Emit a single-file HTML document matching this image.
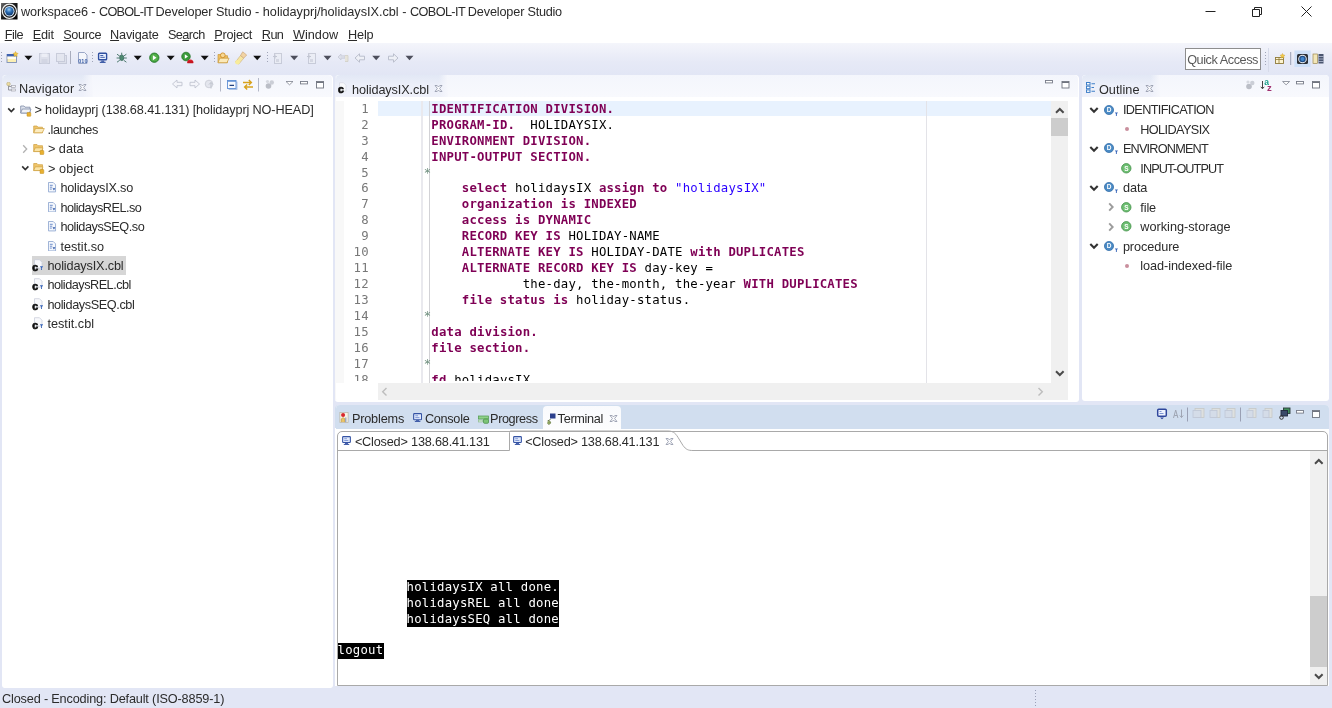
<!DOCTYPE html>
<html lang="en">
<head>
<meta charset="utf-8">
<title>workspace6 - COBOL-IT Developer Studio</title>
<style>
*{box-sizing:border-box;margin:0;padding:0}
html,body{width:1332px;height:708px;overflow:hidden}
body{will-change:transform;position:relative;background:#e2e6f5;font-family:"Liberation Sans",sans-serif;font-size:12.7px;color:#2b2b2b}
.abs{position:absolute}
.t{position:absolute;white-space:pre;line-height:16px;height:16px}
u{text-decoration:underline;text-underline-offset:1px;text-decoration-thickness:1px}
#titlebar{left:0;top:0;width:1332px;height:23px;background:#fff}
#menubar{left:0;top:23px;width:1332px;height:20px;background:#fff}
#toolbar{left:0;top:43px;width:1332px;height:32px;background:linear-gradient(#f4f5fb,#e6e9f6 60%,#e2e6f5)}
.panel{position:absolute;background:#fff;border-radius:4px 4px 3px 3px;overflow:hidden}
.hdr{position:absolute;left:0;top:0;right:0;height:22px;background:#f6f7fc}
.mono{font-family:"DejaVu Sans Mono","Liberation Mono",monospace;font-size:12.3px;letter-spacing:.213px}
.kw{color:#7f0055;font-weight:bold}
.str{color:#2a00ff}
.cm{color:#6f8f7f}
.ln{position:absolute;left:0;width:32.800px;text-align:right;color:#787878;white-space:pre}
.cl{position:absolute;left:42px;white-space:pre;color:#000}
.row{position:absolute;white-space:pre;height:19px;line-height:19px}
</style>
</head>
<body>

<!-- ===== Title bar ===== -->
<div class="abs" id="titlebar">
  <svg class="abs" style="left:1.200px;top:3.300px" width="16.600" height="16.500" viewBox="0 0 17 17">
    <defs><linearGradient id="ig" x1="0" y1="0" x2="1" y2="1"><stop offset="0" stop-color="#6a6a6a"/><stop offset=".45" stop-color="#1c1c1c"/><stop offset="1" stop-color="#000"/></linearGradient>
    <radialGradient id="ib" cx=".45" cy=".3" r=".75"><stop offset="0" stop-color="#9fd0f5"/><stop offset=".45" stop-color="#2d6fb5"/><stop offset="1" stop-color="#0a2f63"/></radialGradient></defs>
    <rect x="0" y="0" width="17" height="17" fill="url(#ig)"/>
    <circle cx="8.600" cy="8.500" r="7.300" fill="none" stroke="#f2f2f2" stroke-width="1.200"/>
    <circle cx="8.600" cy="8.500" r="5.300" fill="#cfe4f6"/>
    <circle cx="8.600" cy="8.500" r="4.300" fill="url(#ib)"/>
  </svg>
  <div class="t" id="title" style="left:20.900px;top:4px"><span style="letter-spacing:-0.068px">workspace6 - </span><span style="letter-spacing:-0.747px">COBOL-IT </span><span style="letter-spacing:-0.096px">Developer </span><span style="letter-spacing:-0.039px">Studio - </span><span style="letter-spacing:-0.010px">holidayprj/holidaysIX.cbl - </span><span style="letter-spacing:-0.591px">COBOL-IT </span><span style="letter-spacing:-0.156px">Developer </span><span style="letter-spacing:-0.314px">Studio</span></div>
  <svg class="abs" style="left:1195px;top:0" width="137" height="23" viewBox="0 0 137 23">
    <path d="M10.5 11.5h10" stroke="#222" stroke-width="1" fill="none"/>
    <path d="M57.5 9.5h7v7h-7zM59.5 9.5v-2h7v7h-2" stroke="#222" stroke-width="1" fill="none"/>
    <path d="M106.5 6.5l10 10M116.5 6.5l-10 10" stroke="#222" stroke-width="1" fill="none"/>
  </svg>
</div>

<!-- ===== Menu bar ===== -->
<div class="abs" id="menubar">
  <div class="t m" style="left:4.7px;top:4px;letter-spacing:-0.505px"><u>F</u>ile</div>
  <div class="t m" style="left:32.7px;top:4px;letter-spacing:-0.193px"><u>E</u>dit</div>
  <div class="t m" style="left:63.2px;top:4px;letter-spacing:-0.349px"><u>S</u>ource</div>
  <div class="t m" style="left:110.1px;top:4px;letter-spacing:-0.199px"><u>N</u>avigate</div>
  <div class="t m" style="left:168.0px;top:4px;letter-spacing:-0.603px">Se<u>a</u>rch</div>
  <div class="t m" style="left:214.2px;top:4px;letter-spacing:-0.215px"><u>P</u>roject</div>
  <div class="t m" style="left:261.8px;top:4px;letter-spacing:-0.599px"><u>R</u>un</div>
  <div class="t m" style="left:292.9px;top:4px;letter-spacing:0.029px"><u>W</u>indow</div>
  <div class="t m" style="left:348.0px;top:4px;letter-spacing:-0.146px"><u>H</u>elp</div>
</div>

<!-- ===== Toolbar ===== -->
<div class="abs" id="toolbar">
  <svg class="abs" style="left:0;top:-.600px" width="430" height="32" viewBox="0 0 430 32">
  <path d="M1.5 10v12" stroke="#a0a5b8" stroke-width="1" stroke-dasharray="1 2"/>
  <g><rect x="7" y="12.5" width="9.5" height="8" fill="#fbefb4" stroke="#7d8fb8" stroke-width=".9"/><rect x="7.500" y="14" width="8.500" height="3" fill="#fffdf2"/><rect x="7" y="12" width="9.5" height="2.4" fill="#3d62b0"/><path d="M15.5 9.5l.9 1.6 1.7.3-1.2 1.3.3 1.8-1.7-.8-1.6.8.3-1.8-1.2-1.3 1.7-.3z" fill="#f2c94c" stroke="#c79a1e" stroke-width=".4"/></g>
  <path d="M24.4 13.700h8l-4 4.600z" fill="#111"/>
  <g opacity=".55"><rect x="39.5" y="11.5" width="10" height="10" fill="#d5d8e2" stroke="#aeb3c4"/><rect x="41.5" y="11.5" width="6" height="3.5" fill="#eef0f6"/><rect x="41.5" y="17" width="6" height="4.5" fill="#c2c6d4"/></g>
  <g opacity=".55"><rect x="58.5" y="13.500" width="8" height="8" fill="#d5d8e2" stroke="#aeb3c4"/><rect x="56.5" y="11.500" width="8" height="8" fill="#dfe2ea" stroke="#aeb3c4"/></g>
  <path d="M70.5 9v13" stroke="#a9adbd" stroke-width="1"/>
  <g><path d="M78.500 10.500h6l2.500 2.500v8.500h-8.500z" fill="#f4f6fb" stroke="#9aa7c7" stroke-width="1"/><text x="78.300" y="21" font-family="Liberation Sans,sans-serif" font-size="5.500" font-weight="bold" fill="#3b5ea8">010</text></g>
  <path d="M92.5 10v12" stroke="#a0a5b8" stroke-width="1" stroke-dasharray="1 2"/>
  <g><rect x="98.600" y="11.200" width="8" height="6.600" rx=".8" fill="#e8f0ff" stroke="#2f4fa0" stroke-width="1.4"/><path d="M100.300 13.500h3M100.300 15.300h4.500" stroke="#2f4fa0" stroke-width=".9"/><rect x="101.200" y="18.600" width="3" height="1.200" fill="#2f4fa0"/><rect x="99.800" y="19.800" width="5.800" height="1.100" fill="#2f4fa0"/></g>
  <g stroke="#3f6f62" stroke-width=".9" fill="none" transform="translate(0 -.3)"><ellipse cx="121.700" cy="16" rx="2" ry="2.800" fill="#4d8a70"/><path d="M117 12.500l2.800 2M126.400 12.500l-2.800 2M116.600 16.300h2.800M126.800 16.300h-2.800M117 20.500l2.800-2M126.400 20.500l-2.800-2M121.700 11v2"/></g>
  <path d="M133.7 13.700h8l-4 4.600z" fill="#111"/>
  <g><circle cx="154.300" cy="15.700" r="4.700" fill="#3a9a3a" stroke="#2a7a2c" stroke-width=".8"/><circle cx="154.300" cy="15.700" r="3.600" fill="#55b04a"/><path d="M152.900 13.200l3.600 2.500-3.600 2.500z" fill="#fff"/></g>
  <path d="M166.7 13.700h8l-4 4.600z" fill="#111"/>
  <g><circle cx="186" cy="14.500" r="4.300" fill="#3a9a3a" stroke="#1f6f22" stroke-width=".7"/><path d="M184.800 12.300l3.200 2.200-3.200 2.200z" fill="#fff"/><path d="M187.300 20.800c0-2.200 1-3.400 3-3.400s3 1.200 3 3.400z" fill="#d8202a"/><rect x="187.300" y="19.300" width="6" height="2" rx=".5" fill="#c4141e"/></g>
  <path d="M200.7 13.700h8l-4 4.600z" fill="#111"/>
  <path d="M214.5 10v12" stroke="#a0a5b8" stroke-width="1" stroke-dasharray="1 2"/>
  <g><path d="M218 12.500h3.500l1 1.200h5v7h-9.500z" fill="#f0bf62" stroke="#c99a3a" stroke-width=".7"/><path d="M218 20.700l1.800-4.500h9.200l-2 4.500z" fill="#fbe9b8" stroke="#c99a3a" stroke-width=".7"/><circle cx="222.800" cy="13.300" r="2.400" fill="#f7d894" stroke="#d0902a" stroke-width=".9"/></g>
  <g><path d="M235.500 20l5-6.500 3.300 2.600-5 6z" fill="#f7e6a0" stroke="#cdb078" stroke-width=".6"/><circle cx="237.500" cy="20.300" r="2.300" fill="#f8ec9a"/><path d="M240.500 13.500l2.200-3.700 4 3.200-2.900 3.100z" fill="#f1d3a4" stroke="#caa070" stroke-width=".6"/></g>
  <path d="M253.2 13.700h8l-4 4.600z" fill="#111"/>
  <path d="M267.5 10v12" stroke="#a0a5b8" stroke-width="1" stroke-dasharray="1 2"/>
  <g opacity=".6"><rect x="274.5" y="11.500" width="7" height="10" fill="#eceef4" stroke="#b4b8c6"/><path d="M273 14.500h4M275 12.500v4" stroke="#a9adbb" stroke-width="1"/><rect x="276" y="17" width="3" height="3" fill="#c9ccd6"/></g>
  <g opacity=".6"><rect x="308.5" y="11.500" width="7" height="10" fill="#eceef4" stroke="#b4b8c6"/><path d="M307 14.500h4M309 12.500v4" stroke="#a9adbb" stroke-width="1"/><rect x="310" y="17" width="3" height="3" fill="#c9ccd6"/></g>
  <path d="M290.2 13.700h8l-4 4.600z" fill="#4d4f5c"/>
  <path d="M323.5 13.700h8l-4 4.600z" fill="#4d4f5c"/>
  <g opacity=".6"><path d="M338 15l3-3v1.800h4v2.400h-4v1.800z" fill="#d6d9e2" stroke="#b0b4c2" stroke-width=".8"/><path d="M345 13.500h3v6h-3" fill="#e6e0c8" stroke="#c2bda6" stroke-width=".8"/></g>
  <path d="M355 16l4.500-4.200v2.400h5v3.600h-5v2.400z" fill="#eef0f6" stroke="#b6bac8" stroke-width=".9"/>
  <path d="M372.2 13.700h8l-4 4.600z" fill="#4d4f5c"/>
  <path d="M398 16l-4.500-4.200v2.400h-5v3.600h5v2.400z" fill="#eef0f6" stroke="#b6bac8" stroke-width=".9"/>
  <path d="M405.5 13.700h8l-4 4.600z" fill="#4d4f5c"/>
  </svg>
  <svg class="abs" style="left:1262px;top:0" width="70" height="32" viewBox="0 0 70 32">
<path d="M3.500 9v14" stroke="#a0a5b8" stroke-width="1" stroke-dasharray="1 2"/>
<path d="M6.500 5v24" stroke="#d7dbea" stroke-width="1"/>
<g><rect x="13.500" y="14.500" width="8" height="6" fill="#fdf4d0" stroke="#8f7a3a" stroke-width=".9"/><path d="M13.500 16.500h8M17 14.500v6" stroke="#8f7a3a" stroke-width=".8"/><path d="M20.500 10.500l.8 1.400 1.600.3-1.100 1.200.2 1.600-1.500-.7-1.500.7.200-1.600-1.100-1.200 1.600-.3z" fill="#f2c94c" stroke="#c79a1e" stroke-width=".4"/></g>
<path d="M28.700 9v13" stroke="#9aa0b4" stroke-width="1"/>
<rect x="32.400" y="7.500" width="16.200" height="16.500" fill="#cde0f8"/>
<g><rect x="35" y="11" width="11" height="10" rx="1.500" fill="#2b2f36"/><circle cx="40.500" cy="16" r="4.300" fill="#e9edf2"/><circle cx="40.500" cy="16" r="3.300" fill="#1e4d86"/><circle cx="40.500" cy="16" r="2" fill="#3f86cf"/></g>
<g><rect x="51" y="11" width="4.500" height="9.500" fill="#f2e6b8" stroke="#8f7a3a" stroke-width=".6"/><rect x="56.500" y="11" width="5" height="9.500" fill="#4a556f"/><path d="M56.500 13.500h5M56.500 16h5M56.500 18.500h5" stroke="#c9d0e4" stroke-width=".7"/></g>
</svg>
  <div class="abs" style="left:1185px;top:5px;width:76px;height:22px;background:#fff;border:1px solid #8e8e8e"></div>
  <div class="t" style="left:1187.2px;top:8.500px;color:#5a5a5a;letter-spacing:-0.448px">Quick Access</div>
</div>

<!-- panel underlays (exact outer extents) -->
<div class="abs" style="left:2px;top:75px;width:331px;height:613px;background:#fff;border-radius:4px 4px 3px 3px"></div>
<div class="abs" style="left:2px;top:75px;width:84px;height:22px;background:linear-gradient(#e2e8f5,#eceff9 45%,#eff1fa);border-radius:4px 0 0 0"></div>
<div class="abs" style="left:335px;top:75px;width:744px;height:327px;background:#fff;border-radius:4px 4px 3px 3px"></div>
<div class="abs" style="left:335px;top:75px;width:106px;height:22px;background:linear-gradient(#e2e8f5,#eceff9 45%,#eff1fa);border-radius:4px 0 0 0"></div>
<div class="abs" style="left:335px;top:97px;width:9px;height:303px;background:#f8f8f8"></div>
<div class="abs" style="left:335px;top:405px;width:993.500px;height:23.600px;background:#d1deef;border-radius:4px 4px 0 0"></div>
<div class="abs" style="left:335px;top:428px;width:993.500px;height:258px;background:#fff"></div>

<!-- ===== Navigator ===== -->
<div class="panel" id="nav" style="left:3px;top:75px;width:329px;height:613px">
  <div class="hdr" style="background:linear-gradient(#f4f6fc,#f8f9fd)"></div>
  <div class="abs" style="left:0;top:0;width:90px;height:22px;background:linear-gradient(90deg,rgba(244,246,252,0) 88%,#f6f7fc),linear-gradient(#e2e8f5,#eceff9 45%,#eff1fa);border-radius:4px 0 0 0"></div>
  <svg class="abs" style="left:2.500px;top:6.500px" width="11" height="10" viewBox="0 0 11 10"><path d="M2.500 2v6h3M2.500 4.500h3" stroke="#8d8f96" fill="none" stroke-width=".9"/><circle cx="2.500" cy="2" r="1.800" fill="#ecdca0" stroke="#b9ad80" stroke-width=".6"/><rect x="5.500" y="3.500" width="4" height="2" fill="#f4f4f8" stroke="#9a9ca6" stroke-width=".6"/><rect x="5.500" y="7" width="4" height="2" fill="#f4f4f8" stroke="#9a9ca6" stroke-width=".6"/></svg>
  <div class="t" style="left:15.9px;top:6.300px;letter-spacing:0.116px">Navigator</div>
  <svg class="abs" style="left:75px;top:8px" width="9" height="9" viewBox="0 0 9 9"><path d="M1 1.500l2.200 0 1.300 1.500 1.300-1.500 2.200 0-2.400 3 2.400 3-2.200 0-1.300-1.500-1.300 1.500-2.200 0 2.400-3z" fill="#fbfbfd" stroke="#8d93a6" stroke-width=".8"/></svg>
  <svg class="abs" style="left:165px;top:0" width="164" height="25" viewBox="0 0 164 25">
<path d="M4.500 9l4.500-4v2.300h5v3.400h-5v2.300z" fill="#f4f5fa" stroke="#bfc3d0" stroke-width=".9"/>
<path d="M31.500 9l-4.500-4v2.300h-5v3.400h5v2.300z" fill="#f4f5fa" stroke="#bfc3d0" stroke-width=".9"/>
<g opacity=".6"><circle cx="41" cy="9" r="3.800" fill="#d9dbe4" stroke="#a9adba" stroke-width=".8"/><path d="M43 13.500v-6l-2 2m2-2l2 2" stroke="#9a9eac" stroke-width="1" fill="none"/></g>
<path d="M52.500 3v13.500" stroke="#b4b8c8" stroke-width="1"/>
<g><rect x="61" y="7" width="8" height="7.500" fill="#dfe8f8" stroke="#9db6de" stroke-width=".8"/><rect x="59.500" y="5.500" width="8.500" height="8" fill="#f6f9fe" stroke="#5f8fd4" stroke-width=".9"/><path d="M59.500 6.200h8.500" stroke="#5f8fd4" stroke-width="1.200"/><path d="M61.500 10.300h4.500" stroke="#23427e" stroke-width="1.200"/></g>
<g fill="none" stroke="#d8a21c" stroke-width="1.400"><path d="M75 7.500h8M80.800 5l2.600 2.500-2.600 2.500"/><path d="M85 12h-8M79.200 9.500l-2.600 2.500 2.600 2.500"/></g>
<path d="M90.500 3v13.500" stroke="#b4b8c8" stroke-width="1"/>
<g opacity=".7"><circle cx="100.500" cy="11" r="2.800" fill="#a3a6b0"/><circle cx="103.800" cy="7.500" r="2.200" fill="#b9bcc6"/><circle cx="99.500" cy="6.500" r="1.600" fill="#c9ccd4"/></g>
<path d="M118 6.500h7l-3.500 3.300z" fill="#fff" stroke="#7d818e" stroke-width=".8"/>
<rect x="132.500" y="6.500" width="7" height="2.400" fill="#fff" stroke="#777b88" stroke-width=".9"/>
<rect x="148.500" y="6.500" width="7" height="6.500" fill="#fff" stroke="#70747f" stroke-width=".9"/><path d="M148.500 7.500h7" stroke="#70747f" stroke-width="1"/>
</svg>
  <div class="abs" style="left:29px;top:180.6px;width:93.500px;height:19.700px;background:#d6d6d6"></div>
  <svg class="abs" style="left:3px;top:31.0px" width="10" height="8" viewBox="0 0 10 8"><path d="M2.200 2.400l3.100 3.100 3.100-3.100" fill="none" stroke="#303030" stroke-width="1.600"/></svg>
  <svg class="abs" style="left:17px;top:28.5px" width="13" height="14" viewBox="0 0 13 14"><path d="M.700 2h3.300l1 1.200h5v5.800h-9.300z" fill="#dfe4ee" stroke="#7f8aa6" stroke-width=".8"/><path d="M.700 9l1.600-4h8.700l-1.600 4z" fill="#f1f3f8" stroke="#7f8aa6" stroke-width=".8"/><rect x="7" y="8.500" width="3.800" height="3.800" rx=".6" fill="#e8b030" stroke="#c08f20" stroke-width=".5"/></svg>
  <div class="row" style="left:31.4px;top:26.4px;letter-spacing:-0.123px">&gt; holidayprj (138.68.41.131) [holidayprj NO-HEAD]</div>
  <svg class="abs" style="left:30px;top:48.94999999999999px" width="12" height="11" viewBox="0 0 12 11"><path d="M.700 2h3.300l1 1.200h4.500v5.500h-8.800z" fill="#efc469" stroke="#cfa040" stroke-width=".7"/><path d="M.700 8.800l1.800-4.300h8.800l-2 4.300z" fill="#fcecc0" stroke="#cfa040" stroke-width=".7"/></svg>
  <div class="row" style="left:44.4px;top:45.8px;letter-spacing:-0.425px">.launches</div>
  <svg class="abs" style="left:18px;top:68.9px" width="8" height="10" viewBox="0 0 8 10"><path d="M2.200 1.300l3.500 3.700-3.500 3.700" fill="none" stroke="#b2b2b2" stroke-width="1.300"/></svg>
  <svg class="abs" style="left:30px;top:67.9px" width="12" height="13" viewBox="0 0 12 13"><path d="M.700 1.500h3.300l1 1.200h4.500v5.800h-8.800z" fill="#efc469" stroke="#cfa040" stroke-width=".7"/><path d="M.700 8.600l1.500-3.800h7.800l-1.500 3.800z" fill="#fae3a6" stroke="#cfa040" stroke-width=".7"/><rect x="7" y="7.500" width="3.800" height="4" rx=".6" fill="#e8b030" stroke="#c08f20" stroke-width=".5"/></svg>
  <div class="row" style="left:44.9px;top:65.3px;letter-spacing:0.011px">&gt; data</div>
  <svg class="abs" style="left:17px;top:89.35px" width="10" height="8" viewBox="0 0 10 8"><path d="M2.200 2.400l3.100 3.100 3.100-3.100" fill="none" stroke="#303030" stroke-width="1.600"/></svg>
  <svg class="abs" style="left:30px;top:87.35px" width="12" height="13" viewBox="0 0 12 13"><path d="M.700 1.500h3.300l1 1.200h4.500v5.800h-8.800z" fill="#efc469" stroke="#cfa040" stroke-width=".7"/><path d="M.700 8.600l1.500-3.800h7.800l-1.500 3.800z" fill="#fae3a6" stroke="#cfa040" stroke-width=".7"/><rect x="7" y="7.500" width="3.800" height="4" rx=".6" fill="#e8b030" stroke="#c08f20" stroke-width=".5"/></svg>
  <div class="row" style="left:44.9px;top:84.7px;letter-spacing:0.120px">&gt; object</div>
  <svg class="abs" style="left:45px;top:107.30000000000001px" width="8.500" height="10.400" viewBox="0 0 9 11"><path d="M.500 .500h5l2.500 2.500v7.500h-7.500z" fill="#f5f8fd" stroke="#8fa6d0" stroke-width=".9"/><path d="M2 3.500h3M2 5.500h2.500M2 7.500h2" stroke="#5a7cc0" stroke-width=".9"/><path d="M4.800 6.500h3l-1.500 2.500z" fill="#2f58a8"/></svg>
  <div class="row" style="left:57.4px;top:104.2px;letter-spacing:-0.222px">holidaysIX.so</div>
  <svg class="abs" style="left:45px;top:126.75px" width="8.500" height="10.400" viewBox="0 0 9 11"><path d="M.500 .500h5l2.500 2.500v7.500h-7.500z" fill="#f5f8fd" stroke="#8fa6d0" stroke-width=".9"/><path d="M2 3.500h3M2 5.500h2.500M2 7.500h2" stroke="#5a7cc0" stroke-width=".9"/><path d="M4.800 6.500h3l-1.500 2.500z" fill="#2f58a8"/></svg>
  <div class="row" style="left:57.4px;top:123.7px;letter-spacing:-0.515px">holidaysREL.so</div>
  <svg class="abs" style="left:45px;top:146.2px" width="8.500" height="10.400" viewBox="0 0 9 11"><path d="M.500 .500h5l2.500 2.500v7.500h-7.500z" fill="#f5f8fd" stroke="#8fa6d0" stroke-width=".9"/><path d="M2 3.500h3M2 5.500h2.500M2 7.500h2" stroke="#5a7cc0" stroke-width=".9"/><path d="M4.800 6.500h3l-1.500 2.500z" fill="#2f58a8"/></svg>
  <div class="row" style="left:57.4px;top:143.1px;letter-spacing:-0.450px">holidaysSEQ.so</div>
  <svg class="abs" style="left:45px;top:165.65px" width="8.500" height="10.400" viewBox="0 0 9 11"><path d="M.500 .500h5l2.500 2.500v7.500h-7.500z" fill="#f5f8fd" stroke="#8fa6d0" stroke-width=".9"/><path d="M2 3.500h3M2 5.500h2.500M2 7.500h2" stroke="#5a7cc0" stroke-width=".9"/><path d="M4.800 6.500h3l-1.500 2.500z" fill="#2f58a8"/></svg>
  <div class="row" style="left:57.4px;top:162.6px;letter-spacing:-0.002px">testit.so</div>
  <svg class="abs" style="left:29px;top:183.60000000000002px" width="13" height="13" viewBox="0 0 13 13"><path d="M2.500 .700h5l2.500 2.500v6h-7.500z" fill="#f8f9fc" stroke="#c5cad8" stroke-width=".7"/><text x="0.200" y="12" font-family="Liberation Sans,sans-serif" font-weight="bold" font-size="10.500" fill="#111" stroke="#111" stroke-width=".700">c</text><path d="M7.800 7.300h3.400l-1.700 2.200z" fill="#3563b8"/><path d="M9.500 9.200v1.800" stroke="#3563b8" stroke-width=".9"/></svg>
  <div class="row" style="left:44.4px;top:182.0px;letter-spacing:-0.154px">holidaysIX.cbl</div>
  <svg class="abs" style="left:29px;top:203.04999999999995px" width="13" height="13" viewBox="0 0 13 13"><path d="M2.500 .700h5l2.500 2.500v6h-7.500z" fill="#f8f9fc" stroke="#c5cad8" stroke-width=".7"/><text x="0.200" y="12" font-family="Liberation Sans,sans-serif" font-weight="bold" font-size="10.500" fill="#111" stroke="#111" stroke-width=".700">c</text><path d="M7.800 7.300h3.400l-1.700 2.200z" fill="#3563b8"/><path d="M9.500 9.200v1.800" stroke="#3563b8" stroke-width=".9"/></svg>
  <div class="row" style="left:44.4px;top:201.4px;letter-spacing:-0.495px">holidaysREL.cbl</div>
  <svg class="abs" style="left:29px;top:222.5px" width="13" height="13" viewBox="0 0 13 13"><path d="M2.500 .700h5l2.500 2.500v6h-7.500z" fill="#f8f9fc" stroke="#c5cad8" stroke-width=".7"/><text x="0.200" y="12" font-family="Liberation Sans,sans-serif" font-weight="bold" font-size="10.500" fill="#111" stroke="#111" stroke-width=".700">c</text><path d="M7.800 7.300h3.400l-1.700 2.200z" fill="#3563b8"/><path d="M9.500 9.200v1.800" stroke="#3563b8" stroke-width=".9"/></svg>
  <div class="row" style="left:44.4px;top:220.9px;letter-spacing:-0.406px">holidaysSEQ.cbl</div>
  <svg class="abs" style="left:29px;top:241.95px" width="13" height="13" viewBox="0 0 13 13"><path d="M2.500 .700h5l2.500 2.500v6h-7.500z" fill="#f8f9fc" stroke="#c5cad8" stroke-width=".7"/><text x="0.200" y="12" font-family="Liberation Sans,sans-serif" font-weight="bold" font-size="10.500" fill="#111" stroke="#111" stroke-width=".700">c</text><path d="M7.800 7.300h3.400l-1.700 2.200z" fill="#3563b8"/><path d="M9.500 9.200v1.800" stroke="#3563b8" stroke-width=".9"/></svg>
  <div class="row" style="left:44.4px;top:240.3px;letter-spacing:0.016px">testit.cbl</div>
</div>

<!-- ===== Editor ===== -->
<div class="panel" id="editor" style="left:336px;top:75px;width:742px;height:326px">
  <div class="hdr" style="background:linear-gradient(#f4f6fc,#f8f9fd)"></div>
  <div class="abs" style="left:0;top:0;width:112px;height:22px;background:linear-gradient(90deg,rgba(244,246,252,0) 92%,#f6f7fc),linear-gradient(#e2e8f5,#eceff9 45%,#eff1fa);border-radius:4px 0 0 0"></div>
  <svg class="abs" style="left:1px;top:7px" width="11" height="13" viewBox="0 0 11 13"><path d="M2.500 .700h4l2.500 2.500v6h-6.500z" fill="#f8f9fc" stroke="#d5d9e4" stroke-width=".7"/><text x="1" y="11.300" font-family="Liberation Sans,sans-serif" font-weight="bold" font-size="10.500" fill="#111" stroke="#111" stroke-width=".700">c</text></svg>
  <div class="t" style="left:16.1px;top:6.700px;letter-spacing:-0.102px">holidaysIX.cbl</div>
  <svg class="abs" style="left:97.500px;top:9px" width="9" height="9" viewBox="0 0 9 9"><path d="M1 1.500l2.200 0 1.300 1.500 1.300-1.500 2.200 0-2.400 3 2.400 3-2.200 0-1.300-1.500-1.300 1.500-2.200 0 2.400-3z" fill="#fbfbfd" stroke="#8d93a6" stroke-width=".8"/></svg>
  <svg class="abs" style="left:709px;top:5px" width="26" height="10" viewBox="0 0 26 10"><rect x=".500" y=".500" width="7" height="2.400" fill="#fff" stroke="#777b88" stroke-width=".9"/><rect x="17" y="1.500" width="7" height="6.500" fill="#fff" stroke="#70747f" stroke-width=".9"/><path d="M17 2.500h7" stroke="#70747f" stroke-width="1"/></svg>
  <div class="abs" style="left:0;top:25.500px;width:8px;height:282px;background:#f8f8f8"></div>
  <div class="abs" style="left:41.8px;top:25.500px;width:673.2px;height:15px;background:#e8f2fe"></div>
  <div class="abs" style="left:85.2px;top:25.500px;width:1.700px;height:282px;background:#e9e9ee"></div>
  <div class="abs" style="left:93.2px;top:25.500px;width:1px;height:282px;background:#d2d2d6"></div>
  <div class="abs" style="left:589.5px;top:25.500px;width:1px;height:282px;background:#e3e3e8"></div>
  <div class="abs mono" id="code" style="left:0;top:26.800px;width:715px;height:279.700px;overflow:hidden;line-height:15.940px">
  <div class="ln" style="top:0.00px">1</div><div class="cl" style="top:0.00px">       <span class="kw">IDENTIFICATION DIVISION.</span></div>
  <div class="ln" style="top:15.94px">2</div><div class="cl" style="top:15.94px">       <span class="kw">PROGRAM-ID.</span>  HOLIDAYSIX.</div>
  <div class="ln" style="top:31.88px">3</div><div class="cl" style="top:31.88px">       <span class="kw">ENVIRONMENT DIVISION.</span></div>
  <div class="ln" style="top:47.82px">4</div><div class="cl" style="top:47.82px">       <span class="kw">INPUT-OUTPUT SECTION.</span></div>
  <div class="ln" style="top:63.76px">5</div><div class="cl" style="top:63.76px">      <span class="cm">*</span></div>
  <div class="ln" style="top:79.70px">6</div><div class="cl" style="top:79.70px">           <span class="kw">select</span> holidaysIX <span class="kw">assign to</span> <span class="str">"holidaysIX"</span></div>
  <div class="ln" style="top:95.64px">7</div><div class="cl" style="top:95.64px">           <span class="kw">organization is INDEXED</span></div>
  <div class="ln" style="top:111.58px">8</div><div class="cl" style="top:111.58px">           <span class="kw">access is DYNAMIC</span></div>
  <div class="ln" style="top:127.52px">9</div><div class="cl" style="top:127.52px">           <span class="kw">RECORD KEY IS</span> HOLIDAY-NAME</div>
  <div class="ln" style="top:143.46px">10</div><div class="cl" style="top:143.46px">           <span class="kw">ALTERNATE KEY IS</span> HOLIDAY-DATE <span class="kw">with DUPLICATES</span></div>
  <div class="ln" style="top:159.40px">11</div><div class="cl" style="top:159.40px">           <span class="kw">ALTERNATE RECORD KEY IS</span> day-key =</div>
  <div class="ln" style="top:175.34px">12</div><div class="cl" style="top:175.34px">                   the-day, the-month, the-year <span class="kw">WITH DUPLICATES</span></div>
  <div class="ln" style="top:191.28px">13</div><div class="cl" style="top:191.28px">           <span class="kw">file status is</span> holiday-status.</div>
  <div class="ln" style="top:207.22px">14</div><div class="cl" style="top:207.22px">      <span class="cm">*</span></div>
  <div class="ln" style="top:223.16px">15</div><div class="cl" style="top:223.16px">       <span class="kw">data division.</span></div>
  <div class="ln" style="top:239.10px">16</div><div class="cl" style="top:239.10px">       <span class="kw">file section.</span></div>
  <div class="ln" style="top:255.04px">17</div><div class="cl" style="top:255.04px">      <span class="cm">*</span></div>
  <div class="ln" style="top:270.98px">18</div><div class="cl" style="top:270.98px">       <span class="kw">fd</span> holidaysIX.</div>
  </div>
  <div class="abs" style="left:715px;top:25.500px;width:17.200px;height:299.500px;background:#f0f0f0"></div>
  <div class="abs" style="left:715px;top:43px;width:17.200px;height:17.500px;background:#cdcdcd"></div>
  <svg class="abs" style="left:719px;top:32px" width="10" height="7" viewBox="0 0 10 7"><path d="M1 5.800l3.800-3.800 3.800 3.800" fill="none" stroke="#4a4a4a" stroke-width="2"/></svg>
  <svg class="abs" style="left:719px;top:295px" width="10" height="7" viewBox="0 0 10 7"><path d="M1 1.200l3.800 3.800 3.800-3.800" fill="none" stroke="#4a4a4a" stroke-width="2"/></svg>
  <div class="abs" style="left:41.8px;top:307.5px;width:673.2px;height:17.500px;background:#f0f0f0"></div>
  <svg class="abs" style="left:45px;top:312px" width="7" height="10" viewBox="0 0 7 10"><path d="M5.500 1l-3.800 3.800 3.800 3.800" fill="none" stroke="#bdbdbd" stroke-width="1.400"/></svg>
  <svg class="abs" style="left:701px;top:312px" width="7" height="10" viewBox="0 0 7 10"><path d="M1.500 1l3.800 3.800-3.800 3.800" fill="none" stroke="#bdbdbd" stroke-width="1.400"/></svg>
</div>

<!-- ===== Outline ===== -->
<div class="panel" id="outline" style="left:1082px;top:75px;width:247px;height:326px">
  <div class="hdr" style="background:linear-gradient(#f4f6fc,#f8f9fd)"></div>
  <div class="abs" style="left:0;top:0;width:78px;height:22px;background:linear-gradient(90deg,rgba(244,246,252,0) 88%,#f6f7fc),linear-gradient(#e2e8f5,#eceff9 45%,#eff1fa);border-radius:4px 0 0 0"></div>
  <svg class="abs" style="left:4px;top:7px" width="10" height="11" viewBox="0 0 10 11"><g fill="#fff" stroke="#3f7fc8" stroke-width="1"><rect x=".500" y=".500" width="3.500" height="2.500"/><rect x=".500" y="4.200" width="3.500" height="2.500"/><rect x=".500" y="7.900" width="3.500" height="2.500"/></g><path d="M5.500 1.800h3.500M5.500 5.500h2.500M5.500 9.200h3.500" stroke="#3f7fc8" stroke-width="1.100"/></svg>
  <div class="t" style="left:16.9px;top:6.700px;letter-spacing:0.076px">Outline</div>
  <svg class="abs" style="left:63px;top:9px" width="9" height="9" viewBox="0 0 9 9"><path d="M1 1.500l2.200 0 1.300 1.500 1.300-1.500 2.200 0-2.400 3 2.400 3-2.200 0-1.300-1.500-1.300 1.500-2.200 0 2.400-3z" fill="#fbfbfd" stroke="#8d93a6" stroke-width=".8"/></svg>
  <svg class="abs" style="left:162px;top:0" width="84" height="25" viewBox="0 0 84 25">
<g opacity=".7"><circle cx="5" cy="11.500" r="2.800" fill="#a3a6b0"/><circle cx="8.300" cy="8" r="2.200" fill="#b9bcc6"/><circle cx="4" cy="7" r="1.600" fill="#c9ccd4"/></g>
<path d="M18.500 6v7.500M16.800 11.800l1.700 2 1.700-2" stroke="#444" stroke-width="1" fill="none"/>
<text x="20.300" y="10" font-family="Liberation Sans,sans-serif" font-size="8.500" font-weight="bold" fill="#1aa08a">a</text>
<text x="23" y="16" font-family="Liberation Sans,sans-serif" font-size="9.500" font-weight="bold" fill="#a03070">z</text>
<path d="M38.600 6.500h7l-3.500 3.300z" fill="#fff" stroke="#7d818e" stroke-width=".8"/>
<rect x="52.500" y="6.500" width="7" height="2.400" fill="#fff" stroke="#777b88" stroke-width=".9"/>
<rect x="68.500" y="6.500" width="7" height="6.500" fill="#fff" stroke="#70747f" stroke-width=".9"/><path d="M68.500 7.500h7" stroke="#70747f" stroke-width="1"/>
</svg>
  <svg class="abs" style="left:6.7px;top:31.0px" width="10" height="8" viewBox="0 0 10 8"><path d="M1.300 2l3.700 3.700 3.700-3.700" fill="none" stroke="#333" stroke-width="2.100"/></svg>
  <svg class="abs" style="left:22.0px;top:29.5px" width="15" height="12" viewBox="0 0 15 12"><circle cx="5" cy="5" r="4.600" fill="#4a8ac4" stroke="#2f6aa6" stroke-width=".7"/><text x="2.800" y="7.400" font-family="Liberation Sans,sans-serif" font-size="6.500" font-weight="bold" fill="#fff">D</text><path d="M10.800 7.500h3.200l-1.600 2z" fill="#3563b8"/><path d="M12.400 9v2" stroke="#3563b8" stroke-width=".9"/></svg>
  <div class="row" style="left:40.9px;top:26.4px;letter-spacing:-0.634px">IDENTIFICATION</div>
  <div class="abs" style="left:42.6px;top:52.4px;width:4px;height:4px;border-radius:2px;background:#c98f9d"></div>
  <div class="row" style="left:58.3px;top:45.8px;letter-spacing:-0.602px">HOLIDAYSIX</div>
  <svg class="abs" style="left:6.7px;top:69.9px" width="10" height="8" viewBox="0 0 10 8"><path d="M1.300 2l3.700 3.700 3.700-3.700" fill="none" stroke="#333" stroke-width="2.100"/></svg>
  <svg class="abs" style="left:22.0px;top:68.4px" width="15" height="12" viewBox="0 0 15 12"><circle cx="5" cy="5" r="4.600" fill="#4a8ac4" stroke="#2f6aa6" stroke-width=".7"/><text x="2.800" y="7.400" font-family="Liberation Sans,sans-serif" font-size="6.500" font-weight="bold" fill="#fff">D</text><path d="M10.800 7.500h3.200l-1.600 2z" fill="#3563b8"/><path d="M12.400 9v2" stroke="#3563b8" stroke-width=".9"/></svg>
  <div class="row" style="left:40.9px;top:65.3px;letter-spacing:-0.795px">ENVIRONMENT</div>
  <svg class="abs" style="left:39.0px;top:87.8px" width="11" height="11" viewBox="0 0 11 11"><circle cx="5.300" cy="5.300" r="4.700" fill="#6fbf73" stroke="#3f8f45" stroke-width=".8"/><text x="3.200" y="7.700" font-family="Liberation Sans,sans-serif" font-size="6.500" font-weight="bold" fill="#fff">S</text></svg>
  <div class="row" style="left:58.3px;top:84.7px;letter-spacing:-0.917px">INPUT-OUTPUT</div>
  <svg class="abs" style="left:6.7px;top:108.8px" width="10" height="8" viewBox="0 0 10 8"><path d="M1.300 2l3.700 3.700 3.700-3.700" fill="none" stroke="#333" stroke-width="2.100"/></svg>
  <svg class="abs" style="left:22.0px;top:107.3px" width="15" height="12" viewBox="0 0 15 12"><circle cx="5" cy="5" r="4.600" fill="#4a8ac4" stroke="#2f6aa6" stroke-width=".7"/><text x="2.800" y="7.400" font-family="Liberation Sans,sans-serif" font-size="6.500" font-weight="bold" fill="#fff">D</text><path d="M10.800 7.500h3.200l-1.600 2z" fill="#3563b8"/><path d="M12.400 9v2" stroke="#3563b8" stroke-width=".9"/></svg>
  <div class="row" style="left:40.9px;top:104.2px;letter-spacing:-0.058px">data</div>
  <svg class="abs" style="left:25.0px;top:127.2px" width="8" height="10" viewBox="0 0 8 10"><path d="M2.200 1.300l3.500 3.700-3.500 3.700" fill="none" stroke="#9c9c9c" stroke-width="1.900"/></svg>
  <svg class="abs" style="left:39.0px;top:126.8px" width="11" height="11" viewBox="0 0 11 11"><circle cx="5.300" cy="5.300" r="4.700" fill="#6fbf73" stroke="#3f8f45" stroke-width=".8"/><text x="3.200" y="7.700" font-family="Liberation Sans,sans-serif" font-size="6.500" font-weight="bold" fill="#fff">S</text></svg>
  <div class="row" style="left:58.3px;top:123.7px;letter-spacing:-0.120px">file</div>
  <svg class="abs" style="left:25.0px;top:146.7px" width="8" height="10" viewBox="0 0 8 10"><path d="M2.200 1.300l3.500 3.700-3.500 3.700" fill="none" stroke="#9c9c9c" stroke-width="1.900"/></svg>
  <svg class="abs" style="left:39.0px;top:146.2px" width="11" height="11" viewBox="0 0 11 11"><circle cx="5.300" cy="5.300" r="4.700" fill="#6fbf73" stroke="#3f8f45" stroke-width=".8"/><text x="3.200" y="7.700" font-family="Liberation Sans,sans-serif" font-size="6.500" font-weight="bold" fill="#fff">S</text></svg>
  <div class="row" style="left:58.3px;top:143.1px;letter-spacing:0.002px">working-storage</div>
  <svg class="abs" style="left:6.7px;top:167.2px" width="10" height="8" viewBox="0 0 10 8"><path d="M1.300 2l3.700 3.700 3.700-3.700" fill="none" stroke="#333" stroke-width="2.100"/></svg>
  <svg class="abs" style="left:22.0px;top:165.7px" width="15" height="12" viewBox="0 0 15 12"><circle cx="5" cy="5" r="4.600" fill="#4a8ac4" stroke="#2f6aa6" stroke-width=".7"/><text x="2.800" y="7.400" font-family="Liberation Sans,sans-serif" font-size="6.500" font-weight="bold" fill="#fff">D</text><path d="M10.800 7.500h3.200l-1.600 2z" fill="#3563b8"/><path d="M12.400 9v2" stroke="#3563b8" stroke-width=".9"/></svg>
  <div class="row" style="left:40.9px;top:162.6px;letter-spacing:-0.075px">procedure</div>
  <div class="abs" style="left:42.6px;top:188.6px;width:4px;height:4px;border-radius:2px;background:#c98f9d"></div>
  <div class="row" style="left:58.3px;top:182.0px;letter-spacing:-0.073px">load-indexed-file</div>
</div>

<!-- ===== Bottom panel ===== -->
<div class="panel" id="bottom" style="left:336px;top:405px;width:993px;height:281px;background:#fff;border-radius:4px 4px 0 0">
  <div class="hdr" style="background:#d1deef;height:23.600px"></div>
  <div class="abs" style="left:207.3px;top:1.300px;width:78px;height:22.300px;background:linear-gradient(#f9fafd,#fdfdfe);border-radius:4px 4px 0 0"></div>
  <svg class="abs" style="left:3px;top:7px" width="10" height="11" viewBox="0 0 10 12"><rect x=".500" y=".500" width="9" height="11" fill="#f7f3e6" stroke="#b9b4a6" stroke-width=".8"/><circle cx="4" cy="3.300" r="2.200" fill="#d8262c"/><path d="M2 11v-3.500l2-1.500 2 1.500v3.500" fill="#e9c46a" stroke="#b38a2a" stroke-width=".6"/><path d="M7 6v5" stroke="#6f86c0" stroke-width="1"/></svg>
  <div class="t" style="left:15.9px;top:6px;letter-spacing:-0.172px">Problems</div>
  <svg class="abs" style="left:77px;top:7.500px" width="9.200" height="9.200" viewBox="0 0 10 10"><rect x=".700" y=".700" width="8.600" height="6.600" rx=".800" fill="#dfe8fb" stroke="#3553a4" stroke-width="1.200"/><path d="M2.500 3h3M2.500 5h4.500" stroke="#5f7cc8" stroke-width=".8"/><rect x="3.300" y="7.800" width="3.400" height="1" fill="#3553a4"/><rect x="2" y="8.800" width="6" height="1.100" fill="#3553a4"/></svg>
  <div class="t" style="left:88.9px;top:6px;letter-spacing:-0.287px">Console</div>
  <svg class="abs" style="left:141.5px;top:10px" width="11" height="9" viewBox="0 0 11 9"><rect x=".500" y="1" width="10" height="3" fill="#8fd08a" stroke="#4d9a4a" stroke-width=".7"/><rect x="5.500" y="4" width="5" height="4.300" rx="1" fill="#7cc476" stroke="#3f8a3c" stroke-width=".7"/><rect x=".500" y="5" width="4" height="2" fill="#cfead0" stroke="#7fb07c" stroke-width=".5"/></svg>
  <div class="t" style="left:154.1px;top:6px;letter-spacing:-0.411px">Progress</div>
  <svg class="abs" style="left:210px;top:8px" width="10" height="12" viewBox="0 0 10 12"><rect x="4" y=".500" width="5.500" height="5" fill="#2b3f8c"/><path d="M4.500 6.500l-3 1.500M2 9.500c1.500-2 3-1 2.500.5s-2.500 1.500-3 .5" stroke="#6a7a4a" stroke-width="1" fill="none"/><circle cx="3" cy="9.500" r="1.500" fill="#8aa05a"/></svg>
  <div class="t" style="left:221.6px;top:6px;letter-spacing:-0.300px">Terminal</div>
  <svg class="abs" style="left:272.5px;top:9px" width="9" height="9" viewBox="0 0 9 9"><path d="M1 1.500l2.200 0 1.300 1.500 1.300-1.500 2.200 0-2.400 3 2.400 3-2.200 0-1.300-1.500-1.300 1.500-2.200 0 2.400-3z" fill="#fbfbfd" stroke="#8d93a6" stroke-width=".8"/></svg>
  <svg class="abs" style="left:819px;top:0px" width="172" height="20" viewBox="0 0 172 20"><g><rect x="2.700" y="4.200" width="8.600" height="7" rx="1" fill="#eef3ff" stroke="#2f479c" stroke-width="1.500"/><path d="M4.500 6.500h2M4.500 8.500h4" stroke="#5f7cc8" stroke-width=".8"/><path d="M5 12.500h4l-2 1.800z" fill="#2f479c"/></g><g opacity=".7" stroke="#8a8e9a" fill="none" stroke-width="1"><path d="M18.500 13l2.200-8 2.200 8M19.300 10.500h3"/><path d="M26.500 4.500v8M24.800 10.500l1.700 2 1.700-2"/></g><path d="M32.500 2.500v14" stroke="#9aa0b4" stroke-width="1"/><g opacity=".55"><rect x="40" y="3.500" width="9" height="9" fill="#e9e3d2" stroke="#bdb7a6" stroke-width=".8"/><rect x="38" y="5.500" width="8" height="7" fill="#d8dbe4" stroke="#b0b4c2" stroke-width=".8"/></g><g opacity=".55"><rect x="57" y="3.500" width="8" height="9" fill="#e9e3d2" stroke="#bdb7a6" stroke-width=".8"/><rect x="55" y="5.500" width="7" height="7" fill="#d8dbe4" stroke="#b0b4c2" stroke-width=".8"/></g><g opacity=".55"><rect x="72" y="3.500" width="8" height="9" fill="#e9e3d2" stroke="#bdb7a6" stroke-width=".8"/><rect x="70" y="5.500" width="7" height="7" fill="#d8dbe4" stroke="#b0b4c2" stroke-width=".8"/></g><path d="M85.500 2.500v14" stroke="#9aa0b4" stroke-width="1"/><g opacity=".55"><rect x="94" y="3.500" width="7" height="9" fill="#e9e3d2" stroke="#bdb7a6" stroke-width=".8"/><rect x="92" y="5.500" width="6" height="7" fill="#d8dbe4" stroke="#b0b4c2" stroke-width=".8"/></g><g opacity=".55"><rect x="110" y="3.500" width="7" height="9" fill="#e9e3d2" stroke="#bdb7a6" stroke-width=".8"/><rect x="108" y="5.500" width="6" height="7" fill="#d8dbe4" stroke="#b0b4c2" stroke-width=".8"/></g><g><rect x="128.500" y="3" width="6.500" height="5.500" fill="#3f8f5a" stroke="#2a3a3a" stroke-width=".9"/><rect x="126" y="5.500" width="6.500" height="5.500" fill="#3a4a68" stroke="#20283c" stroke-width=".9"/><circle cx="126.500" cy="12.500" r="1.800" fill="none" stroke="#333" stroke-width="1"/></g><rect x="141.500" y="5.500" width="7" height="2.600" fill="#fff" stroke="#777b88" stroke-width=".9"/><rect x="157.500" y="5.500" width="7" height="7" fill="#fff" stroke="#70747f" stroke-width=".9"/><path d="M157.500 6.500h7" stroke="#70747f" stroke-width="1"/></svg>
  <div class="abs" style="left:.500px;top:25.500px;width:991.3px;height:255.0px;border:1px solid #a9a9a9;border-radius:5px 5px 0 0;background:#fff"></div>
  <svg class="abs" style="left:0;top:25px" width="993" height="22" viewBox="0 0 993 22">
<path d="M1 20.500H173.500V2.500c0-1 .5-1.500 1.500-1.500H332c6 0 8 3 11 8l4 6.500c3 4 5 5 10 5H992" fill="none" stroke="#a9a9a9" stroke-width="1"/>
</svg>
  <svg class="abs" style="left:5.800px;top:31.300px" width="9" height="9" viewBox="0 0 10 10"><rect x=".700" y=".700" width="8.600" height="6.600" rx=".800" fill="#dfe8fb" stroke="#3553a4" stroke-width="1.200"/><path d="M2.500 3h3M2.500 5h4.500" stroke="#5f7cc8" stroke-width=".8"/><rect x="3.300" y="7.800" width="3.400" height="1" fill="#3553a4"/><rect x="2" y="8.800" width="6" height="1.100" fill="#3553a4"/></svg>
  <div class="t" style="left:18.9px;top:28.5px;letter-spacing:-0.190px">&lt;Closed&gt; 138.68.41.131</div>
  <svg class="abs" style="left:177.200px;top:31.300px" width="9" height="9" viewBox="0 0 10 10"><rect x=".700" y=".700" width="8.600" height="6.600" rx=".800" fill="#dfe8fb" stroke="#3553a4" stroke-width="1.200"/><path d="M2.500 3h3M2.500 5h4.500" stroke="#5f7cc8" stroke-width=".8"/><rect x="3.300" y="7.800" width="3.400" height="1" fill="#3553a4"/><rect x="2" y="8.800" width="6" height="1.100" fill="#3553a4"/></svg>
  <div class="t" style="left:189.2px;top:28.5px;letter-spacing:-0.223px">&lt;Closed&gt; 138.68.41.131</div>
  <svg class="abs" style="left:328.7px;top:32.300px" width="9" height="9" viewBox="0 0 9 9"><path d="M1 1.500l2.200 0 1.300 1.500 1.300-1.500 2.200 0-2.400 3 2.400 3-2.200 0-1.300-1.500-1.300 1.500-2.200 0 2.400-3z" fill="#fbfbfd" stroke="#8d93a6" stroke-width=".8"/></svg>
  <div class="abs mono" id="term" style="left:1.6px;top:174.500px;line-height:15.780px;color:#fff;white-space:pre">
  <div class="abs" style="left:69.0px;top:0;width:152.200px;height:47px;background:#000"></div>
  <div class="abs" style="left:0;top:63.100px;width:46px;height:16px;background:#000"></div>
  <div class="t" style="left:69.0px;top:0.60px;line-height:15.780px">holidaysIX all done.</div>
  <div class="t" style="left:69.0px;top:16.38px;line-height:15.780px">holidaysREL all done</div>
  <div class="t" style="left:69.0px;top:32.16px;line-height:15.780px">holidaysSEQ all done</div>
  <div class="t" style="left:0;top:63.70px;line-height:15.780px">logout</div>
  </div>
  <div class="abs" style="left:973.8px;top:46px;width:17.500px;height:233.5px;background:#f0f0f0"></div>
  <div class="abs" style="left:973.8px;top:191px;width:17.500px;height:70.500px;background:#cdcdcd"></div>
  <svg class="abs" style="left:977.6px;top:52.5px" width="10" height="7" viewBox="0 0 10 7"><path d="M1 5.800l3.800-3.800 3.800 3.800" fill="none" stroke="#4a4a4a" stroke-width="2"/></svg>
  <svg class="abs" style="left:977.6px;top:268px" width="10" height="7" viewBox="0 0 10 7"><path d="M1 1.200l3.800 3.800 3.800-3.800" fill="none" stroke="#4a4a4a" stroke-width="2"/></svg>
</div>

<!-- ===== Status bar ===== -->
<div class="t" id="status" style="left:2.0px;top:690.700px;letter-spacing:-0.161px">Closed - Encoding: Default (ISO-8859-1)</div>

<svg class="abs" style="left:1034px;top:689px" width="3" height="18" viewBox="0 0 3 18"><path d="M1.500 1v16" stroke="#9aa0b8" stroke-width="1" stroke-dasharray="1 2"/></svg>

</body>
</html>
